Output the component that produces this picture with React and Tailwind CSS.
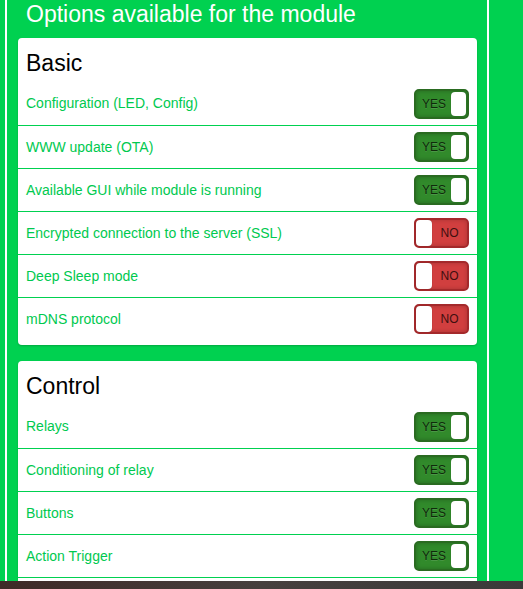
import React from "react";

const basic = [
  ["Configuration (LED, Config)", true],
  ["WWW update (OTA)", true],
  ["Available GUI while module is running", true],
  ["Encrypted connection to the server (SSL)", false],
  ["Deep Sleep mode", false],
  ["mDNS protocol", false],
];

const control = [
  ["Relays", true],
  ["Conditioning of relay", true],
  ["Buttons", true],
  ["Action Trigger", true],
];

function Toggle({ on }) {
  if (on) {
    return (
      <div className="flex h-[30px] w-[55px] items-center rounded-[5px] border-2 border-[#2a6b21] bg-[#318a2b] shadow-[inset_0_0_4px_rgba(0,0,0,0.25)]">
        <div className="flex flex-1 items-center justify-center pl-[1px] text-[12px] leading-none text-[#0f2a0b] [text-shadow:0_1px_0_rgba(255,255,255,0.12)]">
          YES
        </div>
        <div className="mr-[1px] h-[24px] w-[15px] rounded-[4px] bg-white shadow-[0_0_1px_rgba(0,0,0,0.4)]" />
      </div>
    );
  }
  return (
    <div className="flex h-[30px] w-[55px] items-center rounded-[5px] border-2 border-[#a4292b] bg-[#d13f3f] shadow-[inset_0_0_4px_rgba(0,0,0,0.2)]">
      <div className="h-[26px] w-[16px] rounded-[4px] bg-white shadow-[0_0_1px_rgba(0,0,0,0.4)]" />
      <div className="flex flex-1 items-center justify-center text-[12px] leading-none text-[#3f0f0f]">
        NO
      </div>
    </div>
  );
}

function Card({ title, rows, trailing }) {
  return (
    <div className="rounded-[4px] bg-white pb-[5px] shadow-[0_1px_2px_rgba(0,0,0,0.2)]">
      <div className="h-[44px] px-[8px] pt-[11px] text-[23px] leading-[28px] text-black">{title}</div>
      <div>
        {rows.map(([label, on], i) => (
          <div
            key={label}
            className={
              "flex h-[43px] items-center justify-between px-[8px] " +
              (i > 0 ? "border-t border-[#00d150]" : "")
            }
          >
            <span className="text-[14px] text-[#00c94f]">{label}</span>
            <Toggle on={on} />
          </div>
        ))}
        {trailing ? <div className="h-[43px] border-t border-[#00d150]" /> : null}
      </div>
    </div>
  );
}

export default function App() {
  return (
    <div
      className="flex h-[589px] w-[523px] flex-col overflow-hidden bg-[#00d150]"
      style={{ fontFamily: '"Liberation Sans", Arial, sans-serif' }}
    >
      <div className="flex min-h-0 flex-1">
        <div className="ml-[5px] w-[484px] shrink-0 overflow-hidden border-x-2 border-white pl-[11px] pr-[10px]">
          <div className="mb-[10px] h-[28px] px-[8px] text-[23px] leading-[28px] text-white">
            Options available for the module
          </div>
          <div className="flex flex-col gap-[16px]">
            <Card title="Basic" rows={basic} />
            <Card title="Control" rows={control} trailing />
          </div>
        </div>
      </div>
      <div className="h-[8px] shrink-0 bg-[linear-gradient(90deg,#3f2a27_0%,#46403e_50%,#3b3a3a_100%)]" />
    </div>
  );
}
